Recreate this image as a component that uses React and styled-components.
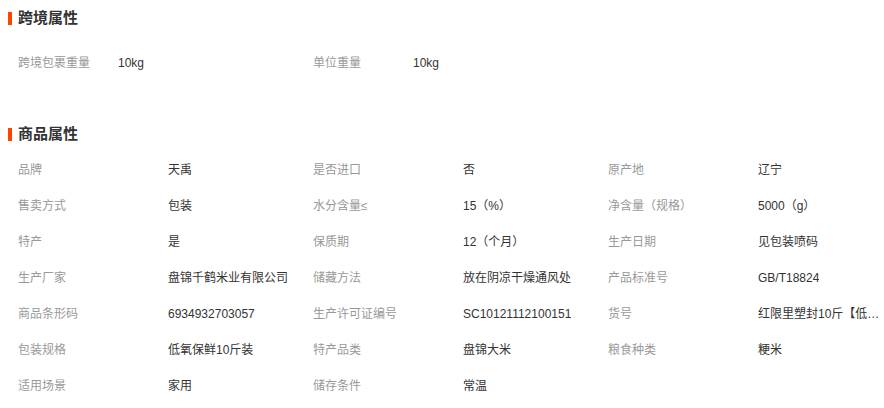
import React from 'react';
import styled, { createGlobalStyle } from 'styled-components';

const GlobalStyle = createGlobalStyle`
  body {
    margin: 0;
    background: #fff;
    font-family: "Liberation Sans", "Noto Sans CJK SC", sans-serif;
  }
`;

const Page = styled.div`
  width: 884px;
  padding-top: 8px;
`;

const Section = styled.section`
  margin-bottom: ${(props) => props.gap || 0}px;
`;

const Title = styled.h3`
  margin: 0;
  height: 20px;
  line-height: 20px;
  padding-left: 18px;
  position: relative;
  font-size: 15px;
  font-weight: bold;
  color: #333;

  &::before {
    content: '';
    position: absolute;
    left: 8px;
    top: 4px;
    width: 4px;
    height: 13px;
    background: #ff4400;
  }
`;

const List = styled.ul`
  list-style: none;
  margin: ${(props) => props.top}px 0 0;
  padding: 0 0 0 18px;
  display: grid;
  grid-template-columns: repeat(${(props) => props.cols}, 295px);
`;

const Item = styled.li`
  display: flex;
  height: 36px;
  line-height: 36px;
  font-size: 12px;
  white-space: nowrap;
`;

const Label = styled.span`
  flex: 0 0 ${(props) => props.w}px;
  color: #999;
`;

const Value = styled.span`
  color: #333;
  max-width: 122px;
  overflow: hidden;
  text-overflow: ellipsis;
`;

const crossBorder = [
  ['跨境包裹重量', '10kg'],
  ['单位重量', '10kg'],
];

const product = [
  ['品牌', '天禹'],
  ['是否进口', '否'],
  ['原产地', '辽宁'],
  ['售卖方式', '包装'],
  ['水分含量≤', '15（%）'],
  ['净含量（规格）', '5000（g）'],
  ['特产', '是'],
  ['保质期', '12（个月）'],
  ['生产日期', '见包装喷码'],
  ['生产厂家', '盘锦千鹤米业有限公司'],
  ['储藏方法', '放在阴凉干燥通风处'],
  ['产品标准号', 'GB/T18824'],
  ['商品条形码', '6934932703057'],
  ['生产许可证编号', 'SC10121112100151'],
  ['货号', '红限里塑封10斤【低氧保鲜】'],
  ['包装规格', '低氧保鲜10斤装'],
  ['特产品类', '盘锦大米'],
  ['粮食种类', '粳米'],
  ['适用场景', '家用'],
  ['储存条件', '常温'],
];

export default function App() {
  return (
    <Page>
      <GlobalStyle />
      <Section gap={43}>
        <Title>跨境属性</Title>
        <List cols={2} top={17}>
          {crossBorder.map(([k, v]) => (
            <Item key={k}>
              <Label w={100}>{k}</Label>
              <Value>{v}</Value>
            </Item>
          ))}
        </List>
      </Section>
      <Section>
        <Title>商品属性</Title>
        <List cols={3} top={8}>
          {product.map(([k, v]) => (
            <Item key={k}>
              <Label w={150}>{k}</Label>
              <Value>{v}</Value>
            </Item>
          ))}
        </List>
      </Section>
    </Page>
  );
}
